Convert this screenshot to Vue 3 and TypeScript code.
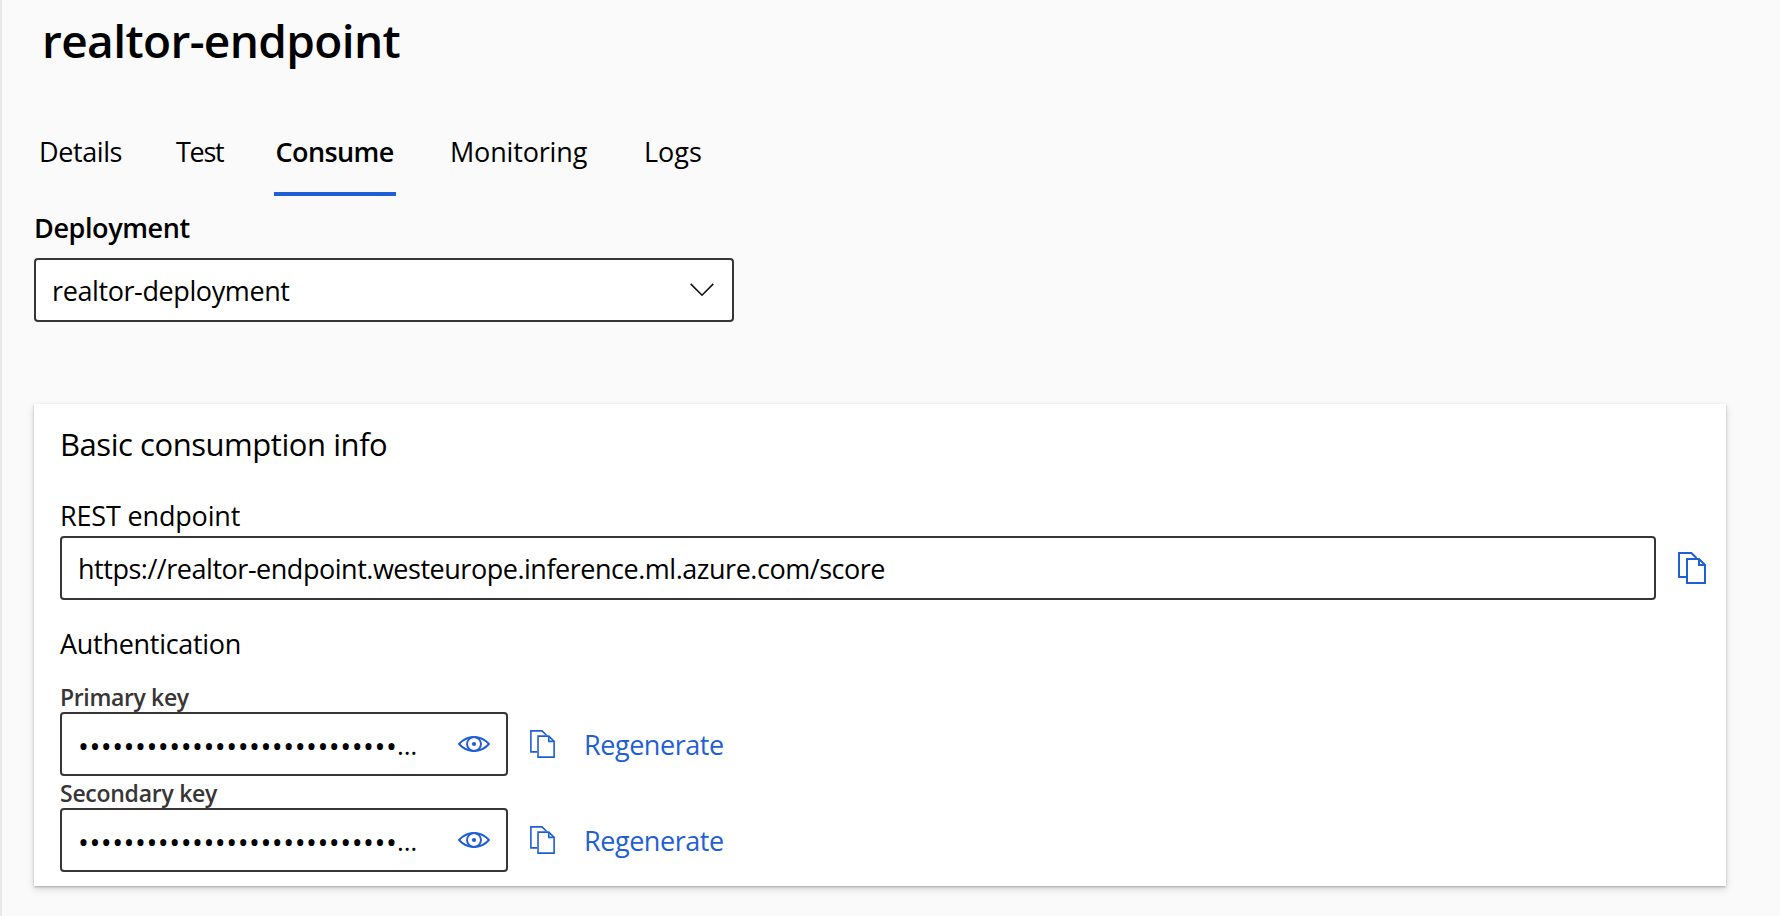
<script setup lang="ts">
import { ref } from 'vue'

const tabs = ['Details', 'Test', 'Consume', 'Monitoring', 'Logs']
const active = ref('Consume')
const keys = ['Primary key', 'Secondary key']
const endpoint = 'https://realtor-endpoint.westeurope.inference.ml.azure.com/score'
const mask = '•'.repeat(28)
</script>

<template>
  <main class="page">
    <h1 class="title">realtor-endpoint</h1>

    <nav class="tabs">
      <button
        v-for="tab in tabs"
        :key="tab"
        class="tab"
        :class="[`tab-${tab.toLowerCase()}`, { active: tab === active }]"
        @click="active = tab"
      >{{ tab }}</button>
    </nav>

    <div class="deploy-label">Deployment</div>
    <div class="field select">
      <span class="select-text">realtor-deployment</span>
      <svg class="chevron" width="24" height="14" viewBox="0 0 24 14">
        <path d="M0.7 0.9 L12 12.2 L23.3 0.9" fill="none" stroke="#111" stroke-width="1.6" />
      </svg>
    </div>

    <section class="card">
      <h2 class="card-title">Basic consumption info</h2>
      <div class="rest-label">REST endpoint</div>
      <div class="row">
        <div class="field url"><span class="url-text">{{ endpoint }}</span></div>
        <svg class="copy-large" width="28" height="32" viewBox="0 0 28 32">
          <g fill="none" stroke="#1f5fd6" stroke-width="2">
            <path d="M8 25 H1 V1 H13.4 L18.5 6" />
            <path d="M9 7 H21 L27 13 V31 H9 Z" />
            <path d="M21 7 V13 H27" />
          </g>
        </svg>
      </div>

      <div class="auth-label">Authentication</div>
      <div v-for="key in keys" :key="key" class="key">
        <div class="key-label" :class="{ second: key === 'Secondary key' }">{{ key }}</div>
        <div class="row">
          <div class="field secret">
            <span class="mask">{{ mask }}</span><span class="dots">…</span>
            <svg class="eye" width="32" height="16" viewBox="0 0 32 16">
              <g fill="none" stroke="#1f5fd6" stroke-width="1.9">
                <path d="M1 8 C5 3.6 10 1 16 1 S27 3.6 31 8 C27 12.4 22 15 16 15 S5 12.4 1 8 Z" />
                <circle cx="16" cy="8" r="7" />
              </g>
              <circle cx="16" cy="8" r="2.1" fill="#1f5fd6" />
            </svg>
          </div>
          <svg class="copy-small" width="25" height="28" viewBox="0 0 28 32" preserveAspectRatio="none">
            <g fill="none" stroke="#1f5fd6" stroke-width="1.8">
              <path d="M8 25 H1 V1 H13.4 L18.5 6" />
              <path d="M9 7 H21 L27 13 V31 H9 Z" />
              <path d="M21 7 V13 H27" />
            </g>
          </svg>
          <a class="regen">Regenerate</a>
        </div>
      </div>
    </section>
  </main>
</template>

<style>
body {
  background: #fafafa;
  overflow: hidden;
}
</style>

<style scoped>
.page {
  box-sizing: border-box;
  width: 1780px;
  height: 916px;
  padding: 10px 0 0 32px;
  border-left: 2px solid #e8e8e8;
  background: #fafafa;
  color: #000;
  font-family: "Open Sans", "Noto Sans", sans-serif;
  font-size: 27px;
  line-height: 36px;
  white-space: nowrap;
}

.title {
  margin: 0 0 64px 8px;
  font-size: 46px;
  font-weight: 600;
  line-height: 60px;
  letter-spacing: -0.62px;
}

.tabs {
  display: flex;
}

.tab {
  box-sizing: border-box;
  height: 62px;
  padding: 0 0 22px;
  border: 0;
  border-bottom: 4px solid transparent;
  background: none;
  color: inherit;
  font: inherit;
  text-align: left;
}

.tab.active {
  border-color: #1f5fd6;
  font-weight: 600;
}

.tab-details {
  width: 137px;
  margin-left: 5px;
  letter-spacing: -0.4px;
}

.tab-test {
  width: 98px;
  letter-spacing: -1.3px;
}

.tab-consume {
  width: 122px;
  padding-left: 1.5px;
  letter-spacing: -0.6px;
}

.tab-monitoring {
  width: 194px;
  margin-left: 54px;
  letter-spacing: -0.17px;
}

.tab-logs {
  width: 60px;
}

.deploy-label {
  margin: 14px 0 12px;
  font-weight: 600;
  letter-spacing: -0.4px;
}

.field {
  display: flex;
  box-sizing: border-box;
  align-items: center;
  height: 64px;
  border: 2px solid #373536;
  border-radius: 4px;
  background: #fff;
}

.select {
  justify-content: space-between;
  width: 700px;
  padding: 0 18px 0 16px;
}

.select-text {
  padding-top: 2px;
  letter-spacing: -0.4px;
}

.card {
  box-sizing: border-box;
  width: 1692px;
  height: 482px;
  margin-top: 82px;
  padding: 20px 0 0 26px;
  background: #fff;
  box-shadow: 0 3.2px 7.2px rgba(0, 0, 0, 0.16), 0 0.8px 1.8px rgba(0, 0, 0, 0.24);
}

.card-title {
  margin: 0 0 34px;
  font-size: 31px;
  font-weight: 400;
  line-height: 40px;
  letter-spacing: -0.45px;
}

.rest-label {
  margin-bottom: 2px;
  letter-spacing: -0.17px;
}

.row {
  display: flex;
  align-items: center;
}

.url {
  width: 1596px;
  padding-left: 16px;
}

.url-text {
  padding-top: 2px;
  letter-spacing: -0.475px;
}

.copy-large {
  margin-left: 22px;
}

.auth-label {
  margin: 26px 0 20px;
  letter-spacing: -0.29px;
}

.key-label {
  color: #373536;
  font-size: 23px;
  font-weight: 600;
  line-height: 30px;
  letter-spacing: -0.36px;
}

.key-label.second {
  margin-top: 2px;
  letter-spacing: -0.27px;
}

.secret {
  width: 448px;
  padding: 0 16px;
}

.mask {
  width: 319px;
  padding-top: 4px;
  font-size: 29px;
  letter-spacing: 0.5px;
}

.dots {
  width: 60px;
  padding-top: 2px;
  font-size: 26px;
}

.eye {
  margin-left: auto;
}

.copy-small {
  margin-left: 21.5px;
}

.regen {
  padding-top: 1px;
  margin-left: 29.5px;
  color: #1f5fd6;
  letter-spacing: -0.45px;
}
</style>
